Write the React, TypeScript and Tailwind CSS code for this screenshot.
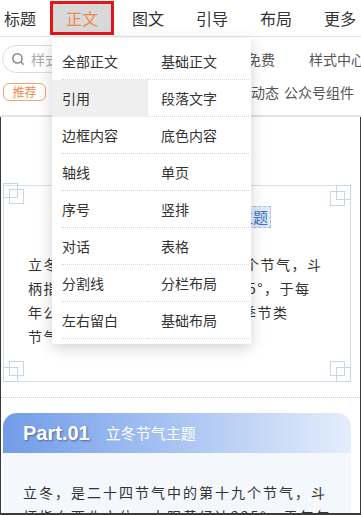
import React from 'react';
import { Search } from 'lucide-react';

const tabs = ['标题', '正文', '图文', '引导', '布局', '更多'];

const menu: [string, string][] = [
  ['全部正文', '基础正文'],
  ['引用', '段落文字'],
  ['边框内容', '底色内容'],
  ['轴线', '单页'],
  ['序号', '竖排'],
  ['对话', '表格'],
  ['分割线', '分栏布局'],
  ['左右留白', '基础布局'],
];

const Corner: React.FC<{ className: string; flip?: string }> = ({ className, flip }) => (
  <svg width="21" height="21" viewBox="0 0 21 21" className={`absolute ${className}`} style={{ transform: flip }}>
    <rect x="0.5" y="0.5" width="14" height="14" fill="none" stroke="#c9d5e7" />
    <rect x="6.5" y="6.5" width="14" height="14" fill="none" stroke="#c9d5e7" />
  </svg>
);

const App: React.FC = () => {
  return (
    <div
      className="relative w-[361px] h-[515px] overflow-hidden bg-white text-[#333]"
      style={{ fontFamily: '"Noto Sans CJK SC", "Noto Sans", sans-serif' }}
    >
      {/* tab bar */}
      <div className="h-[37px] border-b border-[#e8e8e8] flex items-center -ml-[12px]">
        {tabs.map((t, i) =>
          i === 1 ? (
            <div
              key={t}
              className="w-[64px] shrink-0 ml-[-2px] mr-[2px] h-[34px] flex items-center justify-center bg-[#d9d9d9] border-[3px] border-[#e0161c] text-[16px] text-[#ef8a4a]"
            >
              {t}
            </div>
          ) : (
            <div key={t} className="w-[64px] shrink-0 flex items-center justify-center text-[16px] text-[#333]">
              {t}
            </div>
          )
        )}
      </div>

      {/* search row */}
      <div className="flex items-center mt-[8px] h-[28px] whitespace-nowrap">
        <div className="ml-[2px] w-[200px] shrink-0 h-[28px] rounded-full border border-[#dcdcdc] flex items-center pl-[8px] gap-[6px]">
          <Search className="w-[14px] h-[14px] text-[#888]" strokeWidth={2.5} />
          <span className="text-[14px] text-[#aaa]">样式搜索</span>
        </div>
        <span className="ml-[17px] shrink-0 text-[14px] text-[#555]">限时免费</span>
        <span className="ml-[34px] shrink-0 text-[14px] text-[#555]">样式中心</span>
      </div>

      {/* tags row */}
      <div className="flex items-center mt-[10px] h-[18px] whitespace-nowrap">
        <span className="ml-[3px] shrink-0 w-[43px] h-[18px] rounded-[6px] border border-[#f0a574] text-[12px] text-[#ef8a4a] flex items-center justify-center">
          推荐
        </span>
        <span className="ml-[37px] shrink-0 text-[14px] text-[#555]">节日</span>
        <span className="ml-[10px] shrink-0 text-[14px] text-[#555]">节气</span>
        <span className="ml-[10px] shrink-0 text-[14px] text-[#555]">热门样式</span>
        <span className="ml-[10px] shrink-0 text-[14px] text-[#555]">SVG动态</span>
        <span className="ml-[5px] shrink-0 text-[14px] text-[#555]">公众号组件</span>
      </div>

      <div className="mt-[14px] h-[2px] bg-[#e2e2e2]" />

      {/* content */}
      <div className="h-[398px] border-l border-r border-b-2 border-[#3a3a3a] overflow-hidden">
        <div className="relative mt-[68px] ml-[2px] w-[348px] h-[197px] border border-[#d6dfec]">
          <Corner className="-left-px -top-[3px]" />
          <Corner className="-right-px -top-px" flip="scaleX(-1)" />
          <Corner className="-left-px -bottom-px" flip="scaleY(-1)" />
          <Corner className="-right-px -bottom-px" flip="scale(-1,-1)" />
          <div className="flex justify-end mr-[79px] mt-[20px]">
            <span className="h-[22px] px-[2px] flex items-center bg-[#dfe9f8] border border-dashed border-[#a9c0e4] text-[15px] text-[#3f73c9]">
              立冬节气主题
            </span>
          </div>
          <p className="mt-[24px] ml-[24px] text-[14px] leading-[24px] tracking-[1.5px] text-[#333]">
            立冬，是二十四节气中的第十九个节气，斗
            <br />
            柄指向西北方位，太阳黄经达225°，于每
            <br />
            年公历11月7-8日交节。立冬是季节类
            <br />
            节气。
          </p>
        </div>

        <div className="mt-[15px] border-t border-dotted border-[#cfcfcf]" />

        <div className="mt-[15px] ml-[2px] w-[348px]">
          <div className="h-[40px] rounded-t-[14px] bg-gradient-to-r from-[#729ce8] via-[#a9c4f2] to-[#e4edfb] flex items-center pl-[20px]">
            <span
              className="text-[20px] font-bold text-white"
              style={{ fontFamily: '"Liberation Sans", Arial, sans-serif', textShadow: '1px 1px 2px rgba(40,60,110,0.6)' }}
            >
              Part.01
            </span>
            <span className="ml-[16px] text-[15px] text-white">立冬节气主题</span>
          </div>
          <div className="bg-[#f4f7fc] pt-[27px] pl-[20px] h-[80px]">
            <p className="text-[14px] leading-[24px] tracking-[2px] text-[#333] whitespace-nowrap">
              立冬，是二十四节气中的第十九个节气，斗
              <br />
              柄指向西北方位，太阳黄经达225°，于每年
            </p>
          </div>
        </div>
      </div>

      {/* dropdown */}
      <div className="absolute left-[52px] top-[38px] w-[199px] bg-white py-[5px] shadow-[0_4px_14px_rgba(0,0,0,0.18)]">
        {menu.map(([a, b], i) => (
          <div key={a} className="flex h-[37px]">
            <div
              className={`w-[96px] flex items-center pl-[10px] text-[14px] text-[#333] ${
                i === 1 ? 'bg-[#efefef]' : ''
              }`}
            >
              <span className={`w-full h-full flex items-center ${i === 1 ? '' : 'border-b border-dotted border-[#d6d6d6]'}`}>{a}</span>
            </div>
            <div className="flex-1 mr-[2px] flex items-center pl-[13px] text-[14px] text-[#333] border-b border-dotted border-[#d6d6d6]">
              {b}
            </div>
          </div>
        ))}
      </div>
    </div>
  );
};

export default App;
